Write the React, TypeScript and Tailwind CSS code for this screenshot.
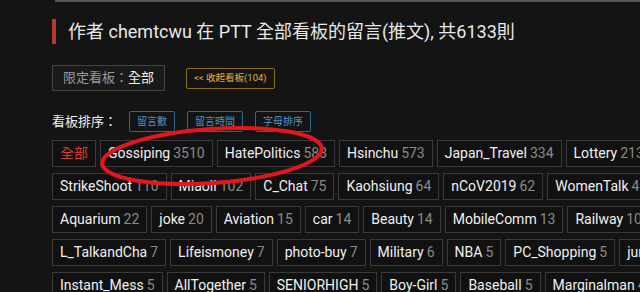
import React from 'react';

type Board = { name: string; count: number };

const rows: Board[][] = [
  [
    { name: 'Gossiping', count: 3510 },
    { name: 'HatePolitics', count: 583 },
    { name: 'Hsinchu', count: 573 },
    { name: 'Japan_Travel', count: 334 },
    { name: 'Lottery', count: 213 },
  ],
  [
    { name: 'StrikeShoot', count: 110 },
    { name: 'Miaoli', count: 102 },
    { name: 'C_Chat', count: 75 },
    { name: 'Kaohsiung', count: 64 },
    { name: 'nCoV2019', count: 62 },
    { name: 'WomenTalk', count: 40 },
  ],
  [
    { name: 'Aquarium', count: 22 },
    { name: 'joke', count: 20 },
    { name: 'Aviation', count: 15 },
    { name: 'car', count: 14 },
    { name: 'Beauty', count: 14 },
    { name: 'MobileComm', count: 13 },
    { name: 'Railway', count: 10 },
  ],
  [
    { name: 'L_TalkandCha', count: 7 },
    { name: 'Lifeismoney', count: 7 },
    { name: 'photo-buy', count: 7 },
    { name: 'Military', count: 6 },
    { name: 'NBA', count: 5 },
    { name: 'PC_Shopping', count: 5 },
    { name: 'juniorhigh', count: 5 },
  ],
  [
    { name: 'Instant_Mess', count: 5 },
    { name: 'AllTogether', count: 5 },
    { name: 'SENIORHIGH', count: 5 },
    { name: 'Boy-Girl', count: 5 },
    { name: 'Baseball', count: 5 },
    { name: 'Marginalman', count: 4 },
  ],
];

const Chip: React.FC<{ board: Board }> = ({ board }) => (
  <div className="shrink-0 h-[27px] flex items-center px-[7px] border border-[#3a3a3a] bg-[#111111] whitespace-nowrap">
    <span className="text-[#f0f0f0]">{board.name}</span>
    <span className="ml-[3px] text-[#8a8a8a]">{board.count}</span>
  </div>
);

const SortButton: React.FC<{ label: string }> = ({ label }) => (
  <button className="h-[21px] px-[7px] border border-[#2d6690] rounded-[2px] text-[10px] text-[#4f94cc] bg-transparent">
    {label}
  </button>
);

export default function App() {
  return (
    <div
      className="relative w-[640px] h-[292px] overflow-hidden bg-[#141414] text-[#eeeeee]"
      style={{ fontFamily: 'Roboto, "Noto Sans CJK TC", sans-serif' }}
    >
      <div className="ml-[55px] h-[2px] bg-[#555555]" />

      <div className="ml-[52px] mt-[16px] flex items-center">
        <div className="w-[4px] h-[25px] bg-[#b5392c]" />
        <h1 className="ml-[12px] text-[18px] text-[#e8e8e8] whitespace-nowrap">
          作者 chemtcwu 在 PTT 全部看板的留言(推文), 共6133則
        </h1>
      </div>

      <div className="ml-[52px] mt-[20px] flex items-center">
        <div className="h-[26px] px-[10px] flex items-center border border-[#444444] bg-[#1a1a1a] text-[13px]">
          <span className="text-[#9a9a9a]">限定看板：</span>
          <span className="text-[#f0f0f0]">全部</span>
        </div>
        <button className="ml-[21px] h-[21px] px-[7px] border border-[#8c6a1c] rounded-[2px] text-[9.5px] text-[#e2b43a] bg-transparent">
          &lt;&lt; 收起看板(104)
        </button>
      </div>

      <div className="ml-[52px] mt-[20px] flex items-center gap-[12px]">
        <span className="text-[13px] text-[#eeeeee]">看板排序：</span>
        <SortButton label="留言數" />
        <SortButton label="留言時間" />
        <SortButton label="字母排序" />
      </div>

      <div className="ml-[52px] mt-[8px] flex flex-col gap-[6px] text-[14px]">
        {rows.map((row, i) => (
          <div key={i} className="flex gap-[4px]">
            {i === 0 && (
              <div className="shrink-0 h-[27px] flex items-center px-[7px] border border-[#3a3a3a] bg-[#111111] text-[#d93a2e]">
                全部
              </div>
            )}
            {row.map((b) => (
              <Chip key={b.name} board={b} />
            ))}
          </div>
        ))}
      </div>

      <svg className="absolute left-0 top-0 pointer-events-none" width="640" height="292">
        <ellipse
          cx="212"
          cy="156"
          rx="110"
          ry="27"
          transform="rotate(-4 212 156)"
          fill="none"
          stroke="#e3161c"
          strokeWidth="4"
        />
      </svg>
    </div>
  );
}
